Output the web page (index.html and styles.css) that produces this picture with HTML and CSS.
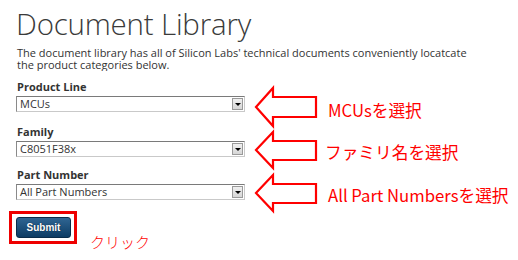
FILE: index.html
```html
<!DOCTYPE html>
<html lang="ja">
<head>
<meta charset="utf-8">
<link rel="stylesheet" href="styles.css">
</head>
<body>
<div class="page">
  <h1 class="title">Document Library</h1>
  <div class="intro">
    <span class="line">The document library has all of Silicon Labs' technical documents conveniently locatcate</span>
    <span class="line">the product categories below.</span>
  </div>
  <div class="field f1">
    <div class="label">Product Line</div>
    <div class="select"><span class="value">MCUs</span><span class="drop"></span></div>
  </div>
  <div class="field f2">
    <div class="label">Family</div>
    <div class="select"><span class="value">C8051F38x</span><span class="drop"></span></div>
  </div>
  <div class="field f3">
    <div class="label">Part Number</div>
    <div class="select"><span class="value">All Part Numbers</span><span class="drop"></span></div>
  </div>
  <div class="actions">
    <button class="submit" type="button">Submit</button>
  </div>
</div>

<div class="callouts">
  <svg class="arrows" width="518" height="260" viewBox="0 0 518 260">
    <polygon points="256,107 273,88 273,97 316,97 316,117 273,117 273,126" />
    <polygon points="256,150 273,132 273,141 316,141 316,160 273,160 273,168" />
    <polygon points="256,193 273,175 273,184 316,184 316,203 273,203 273,211" />
  </svg>
  <span class="note n1">MCUsを選択</span>
  <span class="note n2">ファミリ名を選択</span>
  <span class="note n3">All Part Numbersを選択</span>
  <div class="highlight"></div>
  <span class="note click">クリック</span>
</div>
</body>
</html>
```

FILE: styles.css
```css
html, body {
  margin: 0;
  padding: 0;
  background: #ffffff;
}

body {
  width: 518px;
  height: 260px;
  overflow: hidden;
  position: relative;
  font-family: "Open Sans", "Liberation Sans", sans-serif;
  color: #333333;
}

.page {
  padding: 5px 0 0 16px;
  display: flex;
  flex-direction: column;
  align-items: flex-start;
}

.title {
  margin: 0;
  font-size: 29.5px;
  font-weight: 300;
  line-height: 38px;
  color: #3a3a3a;
  letter-spacing: -0.2px;
}

.intro {
  margin-top: 4px;
  width: 451px;
  overflow: hidden;
  font-size: 11px;
  line-height: 12px;
  padding-left: 1px;
}

.intro .line {
  display: block;
  white-space: nowrap;
}

.field {
  display: flex;
  flex-direction: column;
  gap: 2px;
}

.f1 { margin-top: 9px; }
.f2 { margin-top: 13px; }
.f3 { margin-top: 11px; }

.label {
  font-size: 11px;
  font-weight: 700;
  line-height: 14px;
  padding-left: 1px;
  color: #333333;
}

.select {
  box-sizing: border-box;
  width: 229px;
  height: 16px;
  border: 1px solid #c9c9c9;
  border-top-color: #7a7a7a;
  border-left-color: #8a8a8a;
  display: flex;
  align-items: center;
  justify-content: space-between;
  background: #ffffff;
  padding: 0 1px 0 3px;
}

.value {
  font-size: 11px;
  line-height: 14px;
  color: #333333;
}

.drop {
  box-sizing: border-box;
  width: 11px;
  height: 12px;
  background: linear-gradient(#f0f0f0, #d6d6d6);
  border: 1px solid #9a9a9a;
  position: relative;
}

.drop::after {
  content: "";
  position: absolute;
  left: 2px;
  top: 4px;
  border-left: 3px solid transparent;
  border-right: 3px solid transparent;
  border-top: 3px solid #000000;
}

.actions {
  margin-top: 14px;
}

.submit {
  box-sizing: border-box;
  width: 55px;
  height: 21px;
  border: 1px solid #0a2c4a;
  border-radius: 3px;
  background: linear-gradient(#2f6592, #0d3c64);
  color: #ffffff;
  font-family: "Liberation Sans", Arial, sans-serif;
  font-weight: 700;
  font-size: 10px;
  padding: 0;
  text-shadow: 0 0 1px #001a33;
}

.callouts {
  position: absolute;
  left: 0;
  top: 0;
  width: 518px;
  height: 260px;
  pointer-events: none;
}

.arrows {
  position: absolute;
  left: 0;
  top: 0;
}

.arrows polygon {
  fill: #ffffff;
  stroke: #ff0000;
  stroke-width: 2.2;
}

.note {
  position: absolute;
  color: #ff0000;
  font-family: "Noto Sans CJK JP", "Noto Sans", sans-serif;
  font-size: 16.7px;
  line-height: 20px;
  white-space: nowrap;
}

.n1 { left: 328px; top: 100px; }
.n2 { left: 325px; top: 142px; }
.n3 { left: 328px; top: 185px; }

.click {
  left: 90px;
  top: 232px;
  font-size: 15px;
  font-weight: 300;
}

.highlight {
  position: absolute;
  left: 9px;
  top: 211px;
  width: 68px;
  height: 33px;
  box-sizing: border-box;
  border: 3px solid #ee0000;
}
```
